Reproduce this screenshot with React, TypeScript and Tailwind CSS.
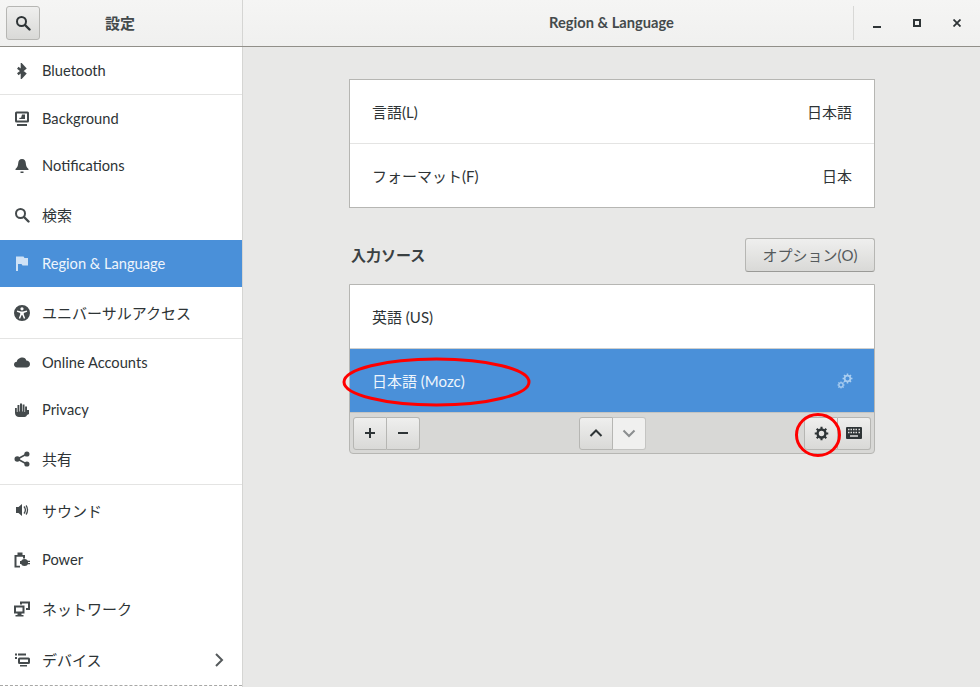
import React from "react";

const FONT = { fontFamily: 'Lato, "Noto Sans CJK JP", "Noto Sans", sans-serif' };

function I({ children, vb = "0 0 16 16", cls = "w-4 h-4" }: { children: React.ReactNode; vb?: string; cls?: string }) {
  return (
    <svg viewBox={vb} className={cls} fill="currentColor">
      {children}
    </svg>
  );
}

const SearchI = () => (
  <I>
    <circle cx="6.5" cy="6.5" r="4.5" fill="none" stroke="currentColor" strokeWidth="2" />
    <path d="M10 10l4.5 4.5" stroke="currentColor" strokeWidth="2.4" strokeLinecap="round" />
  </I>
);
const BluetoothI = () => (
  <I>
    <path d="M3.8 4.800 L11 10.600 L7.900 14 V2 L11 5.400 L3.800 11.200" fill="none" stroke="currentColor" strokeWidth="2.400" />
  </I>
);
const BackgroundI = () => (
  <I>
    <path fillRule="evenodd" d="M2.500 0.500h11A1.500 1.500 0 0 1 15 2v8a1.500 1.500 0 0 1-1.500 1.500h-11A1.500 1.500 0 0 1 1 10V2A1.500 1.500 0 0 1 2.500 .5zM3 2.500v7h10v-7z" />
    <path d="M8 3.500h3v4.500H5l1-1.500 1 .5zM3 13h10v2H3z" />
  </I>
);
const BellI = () => (
  <I>
    <path d="M8 1c2.600 0 3.600 2 3.800 4.200.2 2.600.8 4 2.700 5.800v1H1.500v-1c1.900-1.800 2.500-3.200 2.700-5.800C4.400 3 5.400 1 8 1z" />
    <rect x="6.500" y="13.500" width="3" height="1.500" />
  </I>
);
const FlagI = () => (
  <I>
    <path d="M2 0.500h7.500l1 1.500H14v7.500H8.500l-1-1.500H4V15H2z" />
  </I>
);
const AccessI = () => (
  <I>
    <path fillRule="evenodd" d="M8 0a8 8 0 1 1 0 16A8 8 0 0 1 8 0zM8 2.200a1.600 1.600 0 1 0 0 3.200 1.600 1.600 0 0 0 0-3.200zM3.200 5.500l-.4 1.300 3.400 1.100v1.600L4.800 13.200l1.300.5L7.700 10h.6l1.600 3.700 1.300-.5-1.400-3.700V7.900l3.400-1.100-.4-1.300L9 6.500H7z" />
  </I>
);
const CloudI = () => (
  <I>
    <path d="M8.500 2.500c2 0 3.400 1.300 3.800 3 1.900.1 3.700 1.500 3.700 3.500 0 2-1.500 3.500-3.300 3.500H3c-1.700 0-3-1.200-3-2.900C0 8 1.200 6.700 2.800 6.700c.3-2.300 3-4.200 5.700-4.200z" />
  </I>
);
const HandI = () => (
  <I>
    <path d="M1 6h1.800v4h.7V3h1.900v6.500H6V1.500h2v8h.6V2.500h1.900V10h.6V4.500h1.900V12.500c0 1.500-1 2.500-2.500 2.500H5c-2 0-4-1.500-4-4z" />
    <path d="M13 8h2v4l-2 1z" />
  </I>
);
const ShareI = () => (
  <I>
    <circle cx="3.300" cy="8" r="2.800" />
    <circle cx="12.900" cy="3" r="2.600" />
    <circle cx="12.900" cy="13" r="2.600" />
    <path d="M3.500 8L12.700 3M3.500 8l9.200 5" stroke="currentColor" strokeWidth="1.500" />
  </I>
);
const SoundI = () => (
  <I>
    <path d="M2 5h2.500L8 2v12l-3.500-3H2z" />
    <path d="M10 4.500c1.600 2 1.600 5 0 7M12 3.500c2 2.500 2 6.500 0 9" fill="none" stroke="currentColor" strokeWidth="1.300" />
  </I>
);
const PowerI = () => (
  <I>
    <path d="M0.500 15.500V3h3V.5H8.500V3h2.500v3.500H9V4.800H2.500V13.800H6v1.700z" />
    <circle cx="10.500" cy="10.500" r="3.500" />
    <path d="M6 9h3v3H6zM13 8.800h3v1.200h-3zM13 11h3v1.200h-3z" />
  </I>
);
const NetworkI = () => (
  <I>
    <path fillRule="evenodd" d="M0 4.500h10.500v8H7.500V14h2v1.500H1.500V14h2v-1.500H0zM2 6.500v4h6.500v-4z" />
    <path d="M6 .5h10v8.500h-4V7h2V2.500H8v1H6z" />
  </I>
);
const DevicesI = () => (
  <I>
    <rect x="1" y="1.500" width="2" height="2" />
    <rect x="4" y="1.500" width="8" height="2" />
    <path d="M1 5h2v2H1z" />
    <path fillRule="evenodd" d="M5.500 5.500h9A1.500 1.500 0 0 1 16 7v3.500a1.500 1.500 0 0 1-1.500 1.500h-9A1.500 1.500 0 0 1 4 10.500V7a1.500 1.500 0 0 1 1.500-1.500zm.5 2v2.500h8V7.500z" />
    <rect x="6" y="13" width="7" height="1.500" />
  </I>
);

const Row = ({
  icon,
  label,
  h,
  sel,
  sep,
  chev,
  cjk,
  nudge,
}: {
  icon: React.ReactNode;
  label: string;
  h: string;
  sel?: boolean;
  sep?: boolean;
  chev?: boolean;
  cjk?: boolean;
  nudge?: boolean;
}) => (
  <div
    className={`${h} flex items-center shrink-0 pl-[14px] ${sel ? "bg-[#4a90d9] text-[#eef5fc]" : "text-[#2e3436]"} ${
      sep ? "border-b border-[#e4e4e3]" : ""
    }`}
  >
    <span className={`w-[28px] ${sel ? "text-[#cfe2f6]" : "text-[#444a4c]"}`}>{icon}</span>
    <span className={`flex-1 leading-none ${cjk ? "text-[15px]" : "text-[14.67px]"} ${nudge ? "pt-[2px]" : ""}`}>{label}</span>
    {chev && (
      <svg viewBox="0 0 16 16" className="w-4 h-4 mr-[15px] text-[#555a5c]" fill="none" stroke="currentColor" strokeWidth="2">
        <path d="M5 2L11 8l-6 6" />
      </svg>
    )}
  </div>
);

const Gear = ({ cls }: { cls: string }) => (
  <svg viewBox="0 0 16 16" className={cls} fill="none" stroke="currentColor">
    <circle cx="8" cy="8" r="4.200" strokeWidth="2.600" />
    <path
      d="M8 .8v3M8 12.200v3M.8 8h3M12.200 8h3M2.900 2.900l2.100 2.100M11 11l2.100 2.100M2.900 13.100L5 11M11 5l2.100-2.100"
      strokeWidth="2.200"
    />
  </svg>
);

const btn =
  "flex items-center justify-center h-[33px] border border-[#b6b6b3] bg-gradient-to-b from-[#efefee] to-[#d9d9d7] text-[#2e3436]";

export default function App() {
  return (
    <div className="relative w-[980px] h-[687px] overflow-hidden flex flex-col bg-[#e8e8e7] text-[#2e3436]" style={FONT}>
      <header className="h-[47px] shrink-0 flex border-b border-[#918f89] bg-gradient-to-b from-[#f5f5f4] to-[#f0f0ef]">
        <div className="w-[243px] shrink-0 flex items-center pl-[6px] border-r border-[#d5d5d3]">
          <button className="w-[34px] h-[34px] flex items-center justify-center rounded-[3px] border border-[#b6b6b3] bg-gradient-to-b from-[#efefee] to-[#d9d9d7] text-[#2e3436]">
            <SearchI />
          </button>
          <span className="w-[160px] text-center text-[15px] font-semibold text-[#444a4c]">設定</span>
        </div>
        <div className="flex-1 flex items-center">
          <div className="w-[127px] shrink-0" />
          <span className="flex-1 text-center text-[14.67px] font-bold text-[#444a4c]">Region &amp; Language</span>
          <div className="w-[127px] h-[34px] flex items-center border-l border-[#d8d8d6] shrink-0 pl-[3px]">
            <div className="w-[40px] flex justify-center">
              <span className="block w-[8px] h-[2px] mt-[7px] bg-[#2e3436]" />
            </div>
            <div className="w-[40px] flex justify-center">
              <span className="block w-[8px] h-[8px] border-2 border-[#2e3436]" />
            </div>
            <div className="w-[40px] flex justify-center">
              <svg viewBox="0 0 8 8" className="w-[8px] h-[8px] text-[#2e3436]" stroke="currentColor" strokeWidth="1.800">
                <path d="M.5.500l7 7M7.500.500l-7 7" />
              </svg>
            </div>
          </div>
        </div>
      </header>
      <div className="flex-1 flex min-h-0">
        <aside className="w-[243px] shrink-0 bg-white border-r border-[#d5d5d3] flex flex-col">
          <Row h="h-[48px]" icon={<BluetoothI />} label="Bluetooth" sep nudge />
          <Row h="h-[47px]" icon={<BackgroundI />} label="Background" nudge />
          <Row h="h-[48px]" icon={<BellI />} label="Notifications" />
          <Row h="h-[50px]" icon={<SearchI />} label="検索" cjk />
          <Row h="h-[47px]" icon={<FlagI />} label="Region & Language" sel nudge />
          <Row h="h-[52px]" icon={<AccessI />} label="ユニバーサルアクセス" sep cjk nudge />
          <Row h="h-[47px]" icon={<CloudI />} label="Online Accounts" nudge />
          <Row h="h-[48px]" icon={<HandI />} label="Privacy" />
          <Row h="h-[51px]" icon={<ShareI />} label="共有" sep cjk />
          <Row h="h-[50px]" icon={<SoundI />} label="サウンド" cjk nudge />
          <Row h="h-[49px]" icon={<PowerI />} label="Power" nudge />
          <Row h="h-[50px]" icon={<NetworkI />} label="ネットワーク" cjk />
          <Row h="h-[51px]" icon={<DevicesI />} label="デバイス" chev cjk nudge />
          <div className="border-t border-dashed border-[#a8a8a6]" />
        </aside>
        <main className="flex-1 relative pt-[32px] pl-[106px]">
          <div className="w-[526px] border border-[#b6b6b3] bg-white">
            <div className="h-[64px] flex items-center justify-between px-[22px] pt-[2px] border-b border-[#e4e4e3] text-[15px]">
              <span>言語(L)</span>
              <span>日本語</span>
            </div>
            <div className="h-[63px] flex items-center justify-between px-[22px] pt-[2px] text-[15px]">
              <span>フォーマット(F)</span>
              <span>日本</span>
            </div>
          </div>
          <div className="w-[526px] h-[34px] mt-[30px] flex items-center justify-between pl-[2px]">
            <span className="text-[15px] font-bold text-[#3a4042]">入力ソース</span>
            <button className="w-[130px] h-[34px] rounded-[3px] border border-[#b6b6b3] border-b-[#9a9a97] bg-gradient-to-b from-[#efefee] to-[#d9d9d7] text-[15px] text-[#555a5c]">
              オプション(O)
            </button>
          </div>
          <div className="w-[526px] mt-[12px] border border-[#b6b6b3] rounded-b-[4px] bg-[#d8d8d6]">
            <div className="h-[64px] flex items-center px-[22px] pt-[2px] bg-white text-[15px] border-b border-[#cfcfcd]">英語 (US)</div>
            <div className="h-[63px] flex items-center justify-between pl-[22px] pr-[21px] bg-[#4a90d9] text-[#eef5fc] text-[15px]">
              <span className="pt-[2px]">日本語 (Mozc)</span>
              <span className="relative w-[16px] h-[16px] text-[#a9cdf0]">
                <Gear cls="absolute right-0 top-0 w-[11px] h-[11px]" />
                <Gear cls="absolute left-0 bottom-0 w-[8px] h-[8px]" />
              </span>
            </div>
            <div className="h-[41px] flex items-center justify-between px-[3px] border-t border-[#c4c4c2]">
              <div className="flex">
                <button className={`${btn} w-[34px] rounded-l-[3px]`}>
                  <svg viewBox="0 0 12 12" className="w-[12px] h-[12px]" stroke="currentColor" strokeWidth="2">
                    <path d="M6 1v10M1 6h10" />
                  </svg>
                </button>
                <button className={`${btn} w-[33px] rounded-r-[3px] border-l-0`}>
                  <svg viewBox="0 0 12 12" className="w-[12px] h-[12px]" stroke="currentColor" strokeWidth="2">
                    <path d="M1 6h10" />
                  </svg>
                </button>
              </div>
              <div className="flex mr-[-1px]">
                <button className={`${btn} w-[34px] rounded-l-[3px]`}>
                  <svg viewBox="0 0 14 14" className="w-[14px] h-[14px]" fill="none" stroke="currentColor" strokeWidth="2">
                    <path d="M1.500 10L7 4.500 12.500 10" />
                  </svg>
                </button>
                <button className="flex items-center justify-center h-[33px] w-[33px] rounded-r-[3px] border border-l-0 border-[#c4c4c2] bg-[#f0f0ef] text-[#8b8e8f]">
                  <svg viewBox="0 0 14 14" className="w-[14px] h-[14px]" fill="none" stroke="currentColor" strokeWidth="2">
                    <path d="M1.500 4.500L7 10l5.500-5.500" />
                  </svg>
                </button>
              </div>
              <div className="flex">
                <button className={`${btn} w-[34px] rounded-l-[3px]`}>
                  <Gear cls="w-[15px] h-[15px]" />
                </button>
                <button className={`${btn} w-[33px] rounded-r-[3px] border-l-0`}>
                  <svg viewBox="0 0 16 12" className="w-[16px] h-[12px]">
                    <rect width="16" height="12" rx="1" fill="#2e3436" />
                    <path
                      d="M2 2.500h1.500M4.500 2.500H6M7 2.500h1.500M9.500 2.500H11M12.500 2.500H14M2 5.500h1.500M4.500 5.500H6M7 5.500h1.500M9.500 5.500H11M12.500 5.500H14M4 9h8"
                      stroke="#e0e0df"
                      strokeWidth="1.300"
                    />
                  </svg>
                </button>
              </div>
            </div>
          </div>
        </main>
      </div>
      <svg className="absolute left-0 top-0 w-[980px] h-[687px] pointer-events-none" viewBox="0 0 980 687" fill="none" stroke="#ff0000" strokeWidth="3">
        <ellipse cx="436.500" cy="382" rx="92.500" ry="23" />
        <ellipse cx="818" cy="435" rx="21.500" ry="20.500" />
      </svg>
    </div>
  );
}
